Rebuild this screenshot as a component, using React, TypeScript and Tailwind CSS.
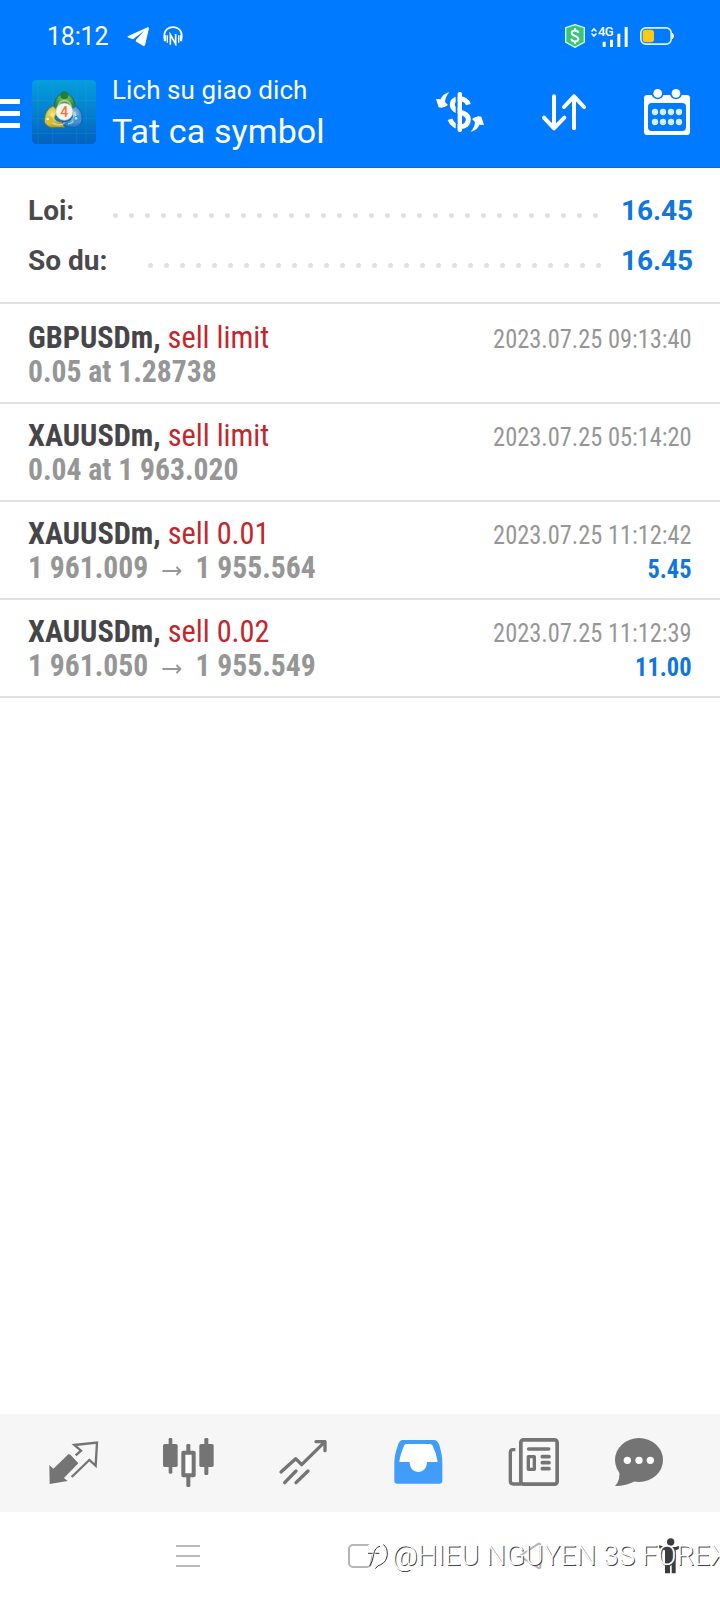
import type { ReactNode } from "react";

interface Deal {
  symbol: string;
  action: string;
  detail: string;
  to?: string;
  time: string;
  profit?: string;
}

const deals: Deal[] = [
  { symbol: "GBPUSDm,", action: "sell limit", detail: "0.05 at 1.28738", time: "2023.07.25 09:13:40" },
  { symbol: "XAUUSDm,", action: "sell limit", detail: "0.04 at 1 963.020", time: "2023.07.25 05:14:20" },
  { symbol: "XAUUSDm,", action: "sell 0.01", detail: "1 961.009", to: "1 955.564", time: "2023.07.25 11:12:42", profit: "5.45" },
  { symbol: "XAUUSDm,", action: "sell 0.02", detail: "1 961.050", to: "1 955.549", time: "2023.07.25 11:12:39", profit: "11.00" },
];

const StatusBar = () => (
  <div className="flex h-[72px] items-center text-white">
    <span className="ml-[47px] w-[62px] text-[25px] leading-none tracking-[-0.2px] whitespace-nowrap">18:12</span>
    <svg className="ml-[18px] h-[21px] w-[23px]" viewBox="0 0 70 62" fill="currentColor">
      <path d="M2 30Q1 33 4 34L18 39L52 14L27 42V46L50 60Q54 61 55 57L67 6Q67 2 63 3Z" />
    </svg>
    <svg className="ml-[13px] h-5 w-5" viewBox="0 0 60 60" fill="none" stroke="currentColor" strokeWidth="5">
      <path d="M4 38V28C4 -5 56 -5 56 28V38" />
      <path d="M6 28V46M54 28V46" strokeWidth="7" />
      <path d="M13 28V50M47 28V50" strokeWidth="4" />
      <path d="M22 56V26L38 54V24" strokeWidth="5" />
    </svg>
    <svg className="ml-[382px] h-6 w-5" viewBox="0 0 60 72">
      <path d="M30 2L58 11V54L30 70L2 54V11Z" fill="#35c777" stroke="#d8fbe9" strokeWidth="4" />
      <path d="M40 27C38 17 20 17 20 27S40 35 40 45S20 55 19 44M30 12V20M30 52V59" fill="none" stroke="#fff" strokeWidth="6" />
    </svg>
    <div className="relative ml-[5px] h-[22px] w-[39px]">
      <svg className="h-[22px] w-[39px]" viewBox="0 0 117 66" fill="currentColor">
        <path d="M3 18L12 8L21 18L18 21L12 16L6 21ZM3 27L12 37L21 27L18 24L12 29L6 24Z" />
        <path d="M38 50h9v16h-9zM60 44h9v22h-9zM82 26h9v40h-9zM104 6h9v60h-9z" />
      </svg>
      <span className="absolute top-0 left-[8px] text-[13px] leading-none font-medium tracking-[-0.6px]">4G</span>
    </div>
    <svg className="ml-[11px] h-[18px] w-[34px]" viewBox="0 0 102 54">
      <rect x="2.5" y="2.5" width="91" height="49" rx="15" fill="none" stroke="#d9f3ff" strokeWidth="5" />
      <path d="M97 18Q104 27 97 36Z" fill="#fff" stroke="#fff" strokeWidth="3" />
      <rect x="8" y="8" width="34" height="38" rx="9" fill="#fcc917" />
    </svg>
  </div>
);

const AppLogo = () => (
  <svg className="ml-3 size-16" viewBox="0 0 192 192">
    <defs>
      <linearGradient id="tile" x1="0" y1="0" x2="0" y2="1">
        <stop offset="0" stopColor="#059fdc" />
        <stop offset="1" stopColor="#0461bd" />
      </linearGradient>
      <radialGradient id="green" cx=".5" cy=".3">
        <stop offset="0" stopColor="#8ccb62" />
        <stop offset="1" stopColor="#2b8c44" />
      </radialGradient>
      <radialGradient id="yellow" cx=".4" cy=".4">
        <stop offset="0" stopColor="#f8ec7c" />
        <stop offset="1" stopColor="#b9a83a" />
      </radialGradient>
      <radialGradient id="sky" cx=".5" cy=".4">
        <stop offset="0" stopColor="#a3dcf8" />
        <stop offset="1" stopColor="#2f80c8" />
      </radialGradient>
    </defs>
    <rect width="192" height="192" rx="14" fill="url(#tile)" />
    <path d="M18 0V192M62 0V192M134 0V192M162 0V192M0 62H192M0 116H192M0 160H192" stroke="#38b4e8" strokeOpacity=".25" strokeWidth="2" />
    <path d="M66 82C68 26 126 26 130 82L116 92C112 60 86 60 80 92Z" fill="url(#green)" stroke="#155f3c" strokeWidth="2" />
    <path d="M64 78C34 88 28 140 58 142H98L90 126C60 124 66 106 80 96Z" fill="url(#yellow)" stroke="#746f20" strokeWidth="2" />
    <path d="M130 78C160 94 156 142 126 142C106 142 92 136 90 124C122 128 128 108 116 92Z" fill="url(#sky)" stroke="#135590" strokeWidth="2" />
    <path d="M78 80C82 56 112 56 118 80M60 128C74 138 92 136 98 128M128 96C134 110 126 130 108 132" fill="none" stroke="#eef5c8" strokeOpacity=".6" strokeWidth="4" />
    <circle cx="97" cy="46" r="12" fill="#237f38" />
    <circle cx="51" cy="122" r="13" fill="#d6bd36" />
    <circle cx="136" cy="119" r="12" fill="#3b94d7" />
    <circle cx="47" cy="117" r="4" fill="#fff9bd" />
    <circle cx="132" cy="115" r="4" fill="#c4e8ff" />
    <circle cx="97" cy="95" r="26" fill="#f8f4ec" stroke="#b7b7a8" strokeWidth="2" />
    <text x="97" y="111" textAnchor="middle" fontSize="42" fontWeight="500" fontFamily="Roboto" fill="#f0743f">4</text>
  </svg>
);

const Header = () => (
  <header className="h-[168px] border-b border-[#1768bd] bg-[#007aff]">
    <StatusBar />
    <div className="flex h-[80px] items-center text-white">
      <div className="mt-[3px] flex w-5 flex-col gap-[7px]">
        <div className="h-[5px] bg-white" />
        <div className="h-[5px] bg-white" />
        <div className="h-[5px] bg-white" />
      </div>
      <AppLogo />
      <div className="ml-4 w-[322px]">
        <div className="text-[26px] leading-[38px] tracking-[0.08px] whitespace-nowrap">Lich su giao dich</div>
        <div className="text-[34px] leading-[44px] tracking-[0.1px] whitespace-nowrap">Tat ca symbol</div>
      </div>
      <svg className="h-12 w-[52px]" viewBox="0 0 156 144" fill="currentColor">
        <path d="M103 50C98 28 55 24 55 50C55 76 103 68 103 94C103 124 58 124 48 94" fill="none" stroke="currentColor" strokeWidth="15" />
        <path d="M68 18V126" stroke="#007aff" strokeWidth="6" />
        <rect x="71" y="12" width="13" height="120" rx="5" />
        <path d="M46 13C30 16 23 26 20 34L6 33L14 58Q28 62 42 51L33 42Q34 26 46 13Z" />
        <path d="M110 131C126 128 133 118 136 110L150 111L142 86Q128 82 114 93L123 102Q122 118 110 131Z" />
      </svg>
      <svg className="ml-[54px] h-[42px] w-12" viewBox="0 0 144 126" fill="none" stroke="currentColor" strokeWidth="12" strokeLinecap="round" strokeLinejoin="round">
        <path d="M42 16V112M12 80L42 112L73 80M102 112V18M72 48L102 16L132 48" />
      </svg>
      <svg className="ml-[54px] size-[50px]" viewBox="0 0 150 150" fill="currentColor">
        <rect x="6" y="24" width="138" height="120" rx="10" />
        <rect x="18" y="48" width="114" height="84" rx="11" fill="#007aff" />
        {[47, 102].map((x) => (
          <g key={x}>
            <circle cx={x} cy="19" r="18" fill="#007aff" />
            <circle cx={x} cy="19" r="13" />
          </g>
        ))}
        {[39, 63, 87, 111].map((x) => (
          <g key={x} fill="#d5efff">
            <circle cx={x} cy="75" r="9.5" />
            <circle cx={x} cy="105" r="9.5" />
          </g>
        ))}
      </svg>
    </div>
  </header>
);

const SummaryRow = ({ label, value, dots }: { label: string; value: string; dots: number }) => (
  <div className="flex h-[50px] items-center text-[28px] leading-none font-bold">
    <span className="grow text-[#4a4a4c]">{label}</span>
    <span className={dots === 31 ? "mt-[9px] mr-[23px] flex gap-[11px]" : "mt-[9px] mr-5 flex gap-[11px]"}>
      {Array.from({ length: dots }, (_, i) => (
        <i key={i} className="size-[5px] rounded-full bg-[#e1e1e1]" />
      ))}
    </span>
    <span className="mr-px w-[70px] text-right tracking-[-0.1px] text-[#1176dc]">{value}</span>
  </div>
);

const DealRow = ({ deal }: { deal: Deal }) => (
  <div className="flex h-[98px] justify-between border-b-2 border-[#e1e1e1] px-7 pt-[14px] [font-stretch:75%]">
    <div className="text-[32px] leading-[34px] font-bold whitespace-nowrap text-[#969696]">
      <div className="origin-left scale-x-[0.947] text-[#464648]">
        {deal.symbol} <span className="font-normal text-[#c1272d]">{deal.action}</span>
      </div>
      <div className="flex origin-left scale-x-[0.926]">
        {deal.detail}
        {deal.to && (
          <>
            <svg className="mx-[15px] mt-[15px] h-[12px] w-[21px]" viewBox="0 0 63 36" fill="none" stroke="currentColor" strokeWidth="6">
              <path d="M0 18H58M46 6L59 18L46 30" />
            </svg>
            {deal.to}
          </>
        )}
      </div>
    </div>
    <div className="origin-right scale-x-[0.938] pt-[2px] text-right text-[26px] leading-[34px] whitespace-nowrap text-[#969696]">
      <div>{deal.time}</div>
      <div className="font-bold text-[#1176dc]">{deal.profit}</div>
    </div>
  </div>
);

const TabIcon = ({ className = "", children }: { className?: string; children: ReactNode }) => (
  <svg className={`size-[52px] shrink-0 ${className}`} viewBox="0 0 156 156" fill="none" stroke="currentColor">
    {children}
  </svg>
);

const TabBar = () => (
  <nav className="flex h-[98px] items-center gap-[63px] bg-[#f6f6f6] pb-[2px] pl-[47px] text-[#747474]">
    <TabIcon>
      <path d="M7 87L19 98L64 55Q68 54 71 57L94 82L51 126L62 135L8 144Z" fill="currentColor" stroke="none" />
      <path d="M86 58L102 44L82 27L150 20L146 89L127 72L74 123" strokeWidth="7" />
    </TabIcon>
    <TabIcon>
      <g fill="currentColor" stroke="none">
        <rect x="3" y="24" width="44" height="69" rx="5" />
        <rect x="20" y="6" width="11" height="107" rx="4" />
        <rect x="112" y="24" width="43" height="69" rx="5" />
        <rect x="127" y="6" width="12" height="111" rx="4" />
        <rect x="73" y="24" width="12" height="24" rx="4" />
        <rect x="73" y="120" width="12" height="33" rx="4" />
      </g>
      <rect x="64" y="50" width="31" height="68" strokeWidth="12" strokeLinejoin="round" fill="#fdfdfd" />
    </TabIcon>
    <TabIcon>
      <path d="M12 108L56 68L74 86L144 17M117 17H144V44M23 140L57 105M57 140L93 105" strokeWidth="10" strokeLinecap="round" strokeLinejoin="round" />
    </TabIcon>
    <TabIcon className="text-[#429cfa]">
      <path
        d="M32 12H126Q136 12 142 27Q151 57 151 82V134Q151 143 142 143H16Q7 143 7 134V82Q7 57 18 27Q23 12 32 12Z"
        fill="currentColor"
        stroke="none"
      />
      <path d="M42 24H116L121 28Q134 52 137 78H105C105 118 53 118 53 78H22Q24 57 37 28Z" fill="#fff" stroke="none" />
    </TabIcon>
    <TabIcon>
      <rect x="41.5" y="11.5" width="109" height="133" rx="8" strokeWidth="11" fill="#f8f8f8" />
      <path d="M25 41H18Q10 41 10 50V135Q10 144 19 144H42" strokeWidth="10" />
      <path d="M65 39H125M106 62H126M106 80H126M106 98H126" strokeWidth="11" strokeLinecap="round" />
      <rect x="64" y="62" width="18" height="38" strokeWidth="10" strokeLinejoin="round" />
    </TabIcon>
    <TabIcon className="-ml-[9px]">
      <g fill="currentColor" stroke="none">
        <ellipse cx="78" cy="72" rx="72" ry="66" />
        <path d="M18 100Q24 132 6 150Q40 150 68 134Z" />
        <circle cx="43" cy="73" r="11" fill="#fff" />
        <circle cx="78" cy="73" r="11" fill="#fff" />
        <circle cx="112" cy="73" r="11" fill="#fff" />
      </g>
    </TabIcon>
  </nav>
);

const SystemNav = () => (
  <div className="relative flex h-[88px] items-center text-[#b5b5b5]">
    <div className="ml-[176px] flex w-6 flex-col gap-2">
      <div className="h-[2px] bg-[#b9b9b9]" />
      <div className="h-[2px] bg-[#b9b9b9]" />
      <div className="h-[2px] bg-[#b9b9b9]" />
    </div>
    <div className="ml-[148px] size-6 rounded-[5px] border-2 border-[#b5b5b5]" />
    <svg className="ml-[146px] h-7 w-6" viewBox="0 0 72 84" fill="none" stroke="currentColor" strokeWidth="6" strokeLinejoin="round">
      <path d="M5 42L62 5Q67 4 67 10V74Q67 80 61 78Z" />
    </svg>
    <svg className="ml-[117px] h-9 w-[24px]" viewBox="0 0 72 108" fill="#3c3c3c">
      <circle cx="35" cy="12" r="11" />
      <path d="M0 22L22 27H50L70 20L69 29L50 37V106H38V74H33V106H18V37L1 31Z" />
    </svg>
    <div className="absolute top-[28px] left-[368px] flex items-center text-white">
      <svg className="h-7 w-5" viewBox="0 0 60 84" fill="none" stroke="#333" strokeWidth="3">
        <path d="M0 10Q8 4 16 12L6 64H-2Z" fill="#fff" stroke="none" />
        <path d="M5 72Q15 58 17 38Q20 16 36 13M0 34H14M22 34H34M46 8Q59 16 58 38Q56 60 38 68Q28 70 22 80" />
      </svg>
      <span className="ml-[4px] text-[28px] leading-8 font-light whitespace-nowrap [font-family:Roboto,sans-serif] [text-shadow:1px_1px_0_#444]">
        @HIEU NGUYEN 3S FOREX
      </span>
    </div>
  </div>
);

const App = () => (
  <div className="flex h-[1600px] w-[720px] flex-col overflow-hidden bg-white [font-family:'Roboto_Condensed',Roboto,sans-serif]">
    <div className="[font-family:Roboto,sans-serif]">
      <Header />
      <section className="h-[136px] border-b-2 border-[#e1e1e1] px-7 pt-[18px]">
        <SummaryRow label="Loi:" value="16.45" dots={31} />
        <SummaryRow label="So du:" value="16.45" dots={29} />
      </section>
    </div>
    <main className="grow pt-[2px]">
      {deals.map((deal) => (
        <DealRow key={deal.time} deal={deal} />
      ))}
    </main>
    <TabBar />
    <SystemNav />
  </div>
);

export default App;
